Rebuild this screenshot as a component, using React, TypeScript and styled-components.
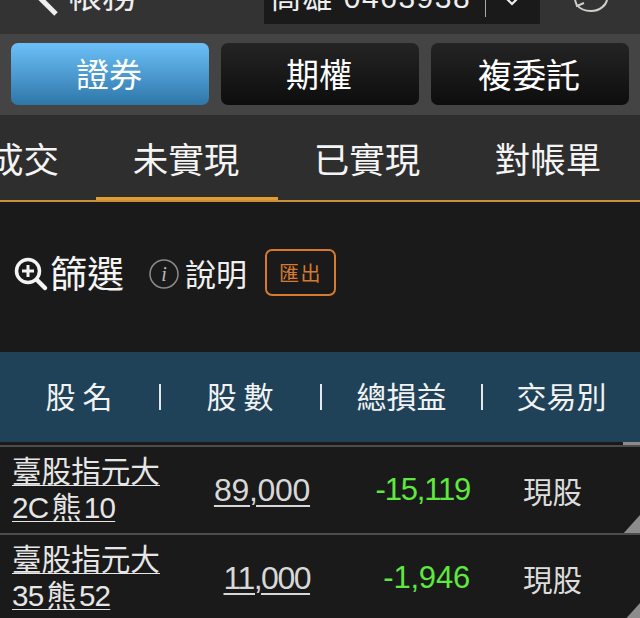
import React from "react";
import styled, { createGlobalStyle } from "styled-components";

const CJK = `"Liberation Sans", "Noto Sans CJK TC", sans-serif`;

const GlobalStyle = createGlobalStyle`
  html, body {
    margin: 0;
    padding: 0;
    background: #1a1a1a;
  }
  body {
    font-family: ${CJK};
    color: #fff;
  }
`;

const Page = styled.div`
  width: 640px;
  height: 618px;
  overflow: hidden;
  background: #1a1a1a;
`;

const TopBar = styled.div`
  height: 34px;
  background: #333;
  overflow: hidden;
  display: flex;
  align-items: flex-start;
`;

const BackLink = styled.div`
  width: 264px;
  height: 20px;
  padding-left: 36px;
  box-sizing: border-box;
  display: flex;
  align-items: flex-start;
  gap: 6px;
  color: #eee;
  svg {
    flex: none;
  }
`;

const BackLabel = styled.span`
  font-size: 34px;
  line-height: 34px;
  margin-top: -21px;
  white-space: nowrap;
`;

const AccountBox = styled.div`
  width: 276px;
  height: 24px;
  background: #1a1a1a;
  display: flex;
  align-items: flex-start;
  color: #eee;
  overflow: hidden;
`;

const AccountText = styled.span`
  width: 221px;
  padding-left: 7px;
  box-sizing: border-box;
  font-size: 30px;
  line-height: 30px;
  margin-top: -17px;
  white-space: nowrap;
  letter-spacing: 1.5px;
`;

const AccountSplit = styled.i`
  flex: none;
  width: 1px;
  height: 17px;
  background: #aaa;
`;

const Chevron = styled.svg`
  margin-left: 20px;
`;

const Refresh = styled.div`
  width: 100px;
  height: 14px;
`;

const SegmentBar = styled.div`
  height: 81px;
  background: #444;
  display: grid;
  grid-template-columns: repeat(3, 198px);
  column-gap: 12px;
  padding: 9px 0 10px 11px;
  box-sizing: border-box;
`;

const Segment = styled.div<{ $active?: boolean; $size?: number }>`
  height: 62px;
  border-radius: 7px;
  display: flex;
  align-items: center;
  justify-content: center;
  font-size: ${(p) => p.$size ?? 33}px;
  padding: 0 2px 2px 0;
  box-sizing: border-box;
  color: #fff;
  background: ${(p) =>
    p.$active
      ? "linear-gradient(#6cc0f8, #2e76a8)"
      : "linear-gradient(#242424, #0d0d0d)"};
`;

const TabBar = styled.div`
  height: 87px;
  box-sizing: border-box;
  background: #2e2e2e;
  border-bottom: 2px solid #c8913a;
  display: flex;
  overflow: hidden;
`;

const Tab = styled.div<{ $active?: boolean; $w: number }>`
  flex: 0 0 ${(p) => p.$w}px;
  height: 87px;
  box-sizing: border-box;
  display: flex;
  align-items: center;
  justify-content: center;
  font-size: 35.5px;
  white-space: nowrap;
  overflow: hidden;
  color: #f4f4f4;
  padding: 2px 2px 0 0;
  border-bottom: 5px solid ${(p) => (p.$active ? "#e09c32" : "transparent")};
`;

const PartialTab = styled(Tab)`
  justify-content: flex-end;
  padding-right: 37px;
`;

const Toolbar = styled.div`
  height: 150px;
  background: #1a1a1a;
  display: flex;
  align-items: flex-start;
  padding: 47px 0 0 13px;
  box-sizing: border-box;
`;

const FilterButton = styled.div`
  display: flex;
  align-items: center;
  gap: 1px;
  font-size: 37px;
  line-height: 46px;
  color: #f4f4f4;
  margin-right: 25px;
`;

const HelpButton = styled.div`
  display: flex;
  align-items: center;
  gap: 6px;
  font-size: 31px;
  line-height: 46px;
  color: #f0f0f0;
  margin-right: 18px;
`;

const ToolLabel = styled.span`
  margin-top: 4px;
`;

const ExportButton = styled.div`
  width: 71px;
  height: 47px;
  box-sizing: border-box;
  border: 2px solid #d57a30;
  border-radius: 7px;
  color: #d57a30;
  font-size: 20px;
  display: flex;
  align-items: center;
  justify-content: center;
  letter-spacing: 1.5px;
`;

const TableHead = styled.div`
  height: 90px;
  background: #1f4259;
  display: flex;
  align-items: center;
  font-size: 30px;
  color: #f2f2f2;
`;

const HeadCell = styled.div<{ $w: number }>`
  flex: 0 0 ${(p) => p.$w}px;
  height: 26px;
  padding-bottom: 5px;
  display: flex;
  align-items: center;
  justify-content: center;
  box-sizing: border-box;
  white-space: nowrap;
  &:not(:last-child) {
    border-right: 2px solid #e4e8ec;
  }
`;

const SpacedText = styled.span`
  letter-spacing: 7px;
  margin-left: 6px;
`;

const HeadGap = styled.div`
  height: 3px;
  background: #1a1a1a;
  position: relative;
  &::after {
    content: "";
    position: absolute;
    right: 0;
    top: 0;
    width: 17px;
    height: 3px;
    background: #8c8c8c;
  }
`;

const Row = styled.div`
  height: 86px;
  background: #1a1a1a;
  border-top: 2px solid #4c4c4c;
  border-bottom: 2px solid #4c4c4c;
  margin-bottom: -2px;
  display: grid;
  grid-template-columns: 170px 140px 160px 170px;
  align-items: center;
  position: relative;
  &::after {
    content: "";
    position: absolute;
    right: 0;
    bottom: -2px;
    width: 18px;
    height: 20px;
    background: #8c8c8c;
    clip-path: polygon(100% 0, 100% 100%, 0 100%);
  }
`;

const NameCell = styled.div`
  padding-left: 12px;
  font-size: 29.6px;
  line-height: 36px;
  color: #e6e6e6;
  text-decoration: underline;
  text-underline-offset: 3px;
  text-decoration-thickness: 1px;
  white-space: nowrap;
`;

const CodeLine = styled.span`
  display: block;
  letter-spacing: -0.8px;
  word-spacing: -4px;
`;

const QtyCell = styled.div<{ $tight: number }>`
  justify-self: end;
  font-size: 32px;
  letter-spacing: ${(p) => p.$tight}px;
  color: #d8d8d8;
  text-decoration: underline;
  text-underline-offset: 4px;
  text-decoration-thickness: 2px;
`;

const PnlCell = styled.div<{ $tight: number }>`
  justify-self: end;
  font-size: 31px;
  letter-spacing: ${(p) => p.$tight}px;
  color: #5fe83f;
`;

const TypeCell = styled.div`
  padding-left: 53px;
  font-size: 29.5px;
  color: #dcdcdc;
`;

const rows = [
  { name: "臺股指元大", code: "2C 熊 10", qty: "89,000", qtyTight: -0.3, pnl: "-15,119", pnlTight: -1.2 },
  { name: "臺股指元大", code: "35 熊 52", qty: "11,000", qtyTight: -1.5, pnl: "-1,946", pnlTight: -0.2 },
];

export default function App() {
  return (
    <Page>
      <GlobalStyle />
      <TopBar>
        <BackLink>
          <svg width="26" height="20" viewBox="0 0 26 20">
            <path d="M0 -6 L20 14" stroke="#eee" strokeWidth="5" fill="none" />
          </svg>
          <BackLabel>帳務</BackLabel>
        </BackLink>
        <AccountBox>
          <AccountText>高雄 0463938</AccountText>
          <AccountSplit />
          <Chevron width="12" height="6" viewBox="0 0 12 6">
            <path d="M1 -1 L6 4 L11 -1" stroke="#eee" strokeWidth="2.2" fill="none" />
          </Chevron>
        </AccountBox>
        <Refresh>
          <svg width="100" height="14" viewBox="0 0 100 14">
            <path
              d="M37 5 C40 9 45 11 51 11 C60 11 66 5 67 0"
              stroke="#cfcfc8"
              strokeWidth="2"
              fill="none"
            />
            <path d="M35 0 L37 6 L44 3" stroke="#cfcfc8" strokeWidth="2" fill="none" />
          </svg>
        </Refresh>
      </TopBar>
      <SegmentBar>
        <Segment $active>證券</Segment>
        <Segment>期權</Segment>
        <Segment $size={34}>複委託</Segment>
      </SegmentBar>
      <TabBar>
        <PartialTab $w={96}>成交</PartialTab>
        <Tab $active $w={182}>未實現</Tab>
        <Tab $w={180}>已實現</Tab>
        <Tab $w={182}>對帳單</Tab>
      </TabBar>
      <Toolbar>
        <FilterButton>
          <svg width="36" height="36" viewBox="0 0 36 36">
            <circle cx="15" cy="15" r="11.5" stroke="#f4f4f4" strokeWidth="3.5" fill="none" />
            <path d="M15 9 V21 M9 15 H21" stroke="#f4f4f4" strokeWidth="3" />
            <path d="M24 24 L32 32" stroke="#f4f4f4" strokeWidth="4.5" strokeLinecap="round" />
          </svg>
          <ToolLabel>篩選</ToolLabel>
        </FilterButton>
        <HelpButton>
          <svg width="30" height="30" viewBox="0 0 30 30">
            <circle cx="15" cy="15" r="14" stroke="#8a8a8a" strokeWidth="1.5" fill="none" />
            <text x="15" y="22" textAnchor="middle" fontFamily="Liberation Serif, serif" fontStyle="italic" fontSize="20" fill="#bbb">i</text>
          </svg>
          <ToolLabel>說明</ToolLabel>
        </HelpButton>
        <ExportButton>匯出</ExportButton>
      </Toolbar>
      <TableHead>
        <HeadCell $w={161}><SpacedText>股名</SpacedText></HeadCell>
        <HeadCell $w={161}><SpacedText>股數</SpacedText></HeadCell>
        <HeadCell $w={161}>總損益</HeadCell>
        <HeadCell $w={157}>交易別</HeadCell>
      </TableHead>
      <HeadGap />
      {rows.map((r) => (
        <Row key={r.code}>
          <NameCell>
            {r.name}
            <CodeLine>{r.code}</CodeLine>
          </NameCell>
          <QtyCell $tight={r.qtyTight}>{r.qty}</QtyCell>
          <PnlCell $tight={r.pnlTight}>{r.pnl}</PnlCell>
          <TypeCell>現股</TypeCell>
        </Row>
      ))}
    </Page>
  );
}
